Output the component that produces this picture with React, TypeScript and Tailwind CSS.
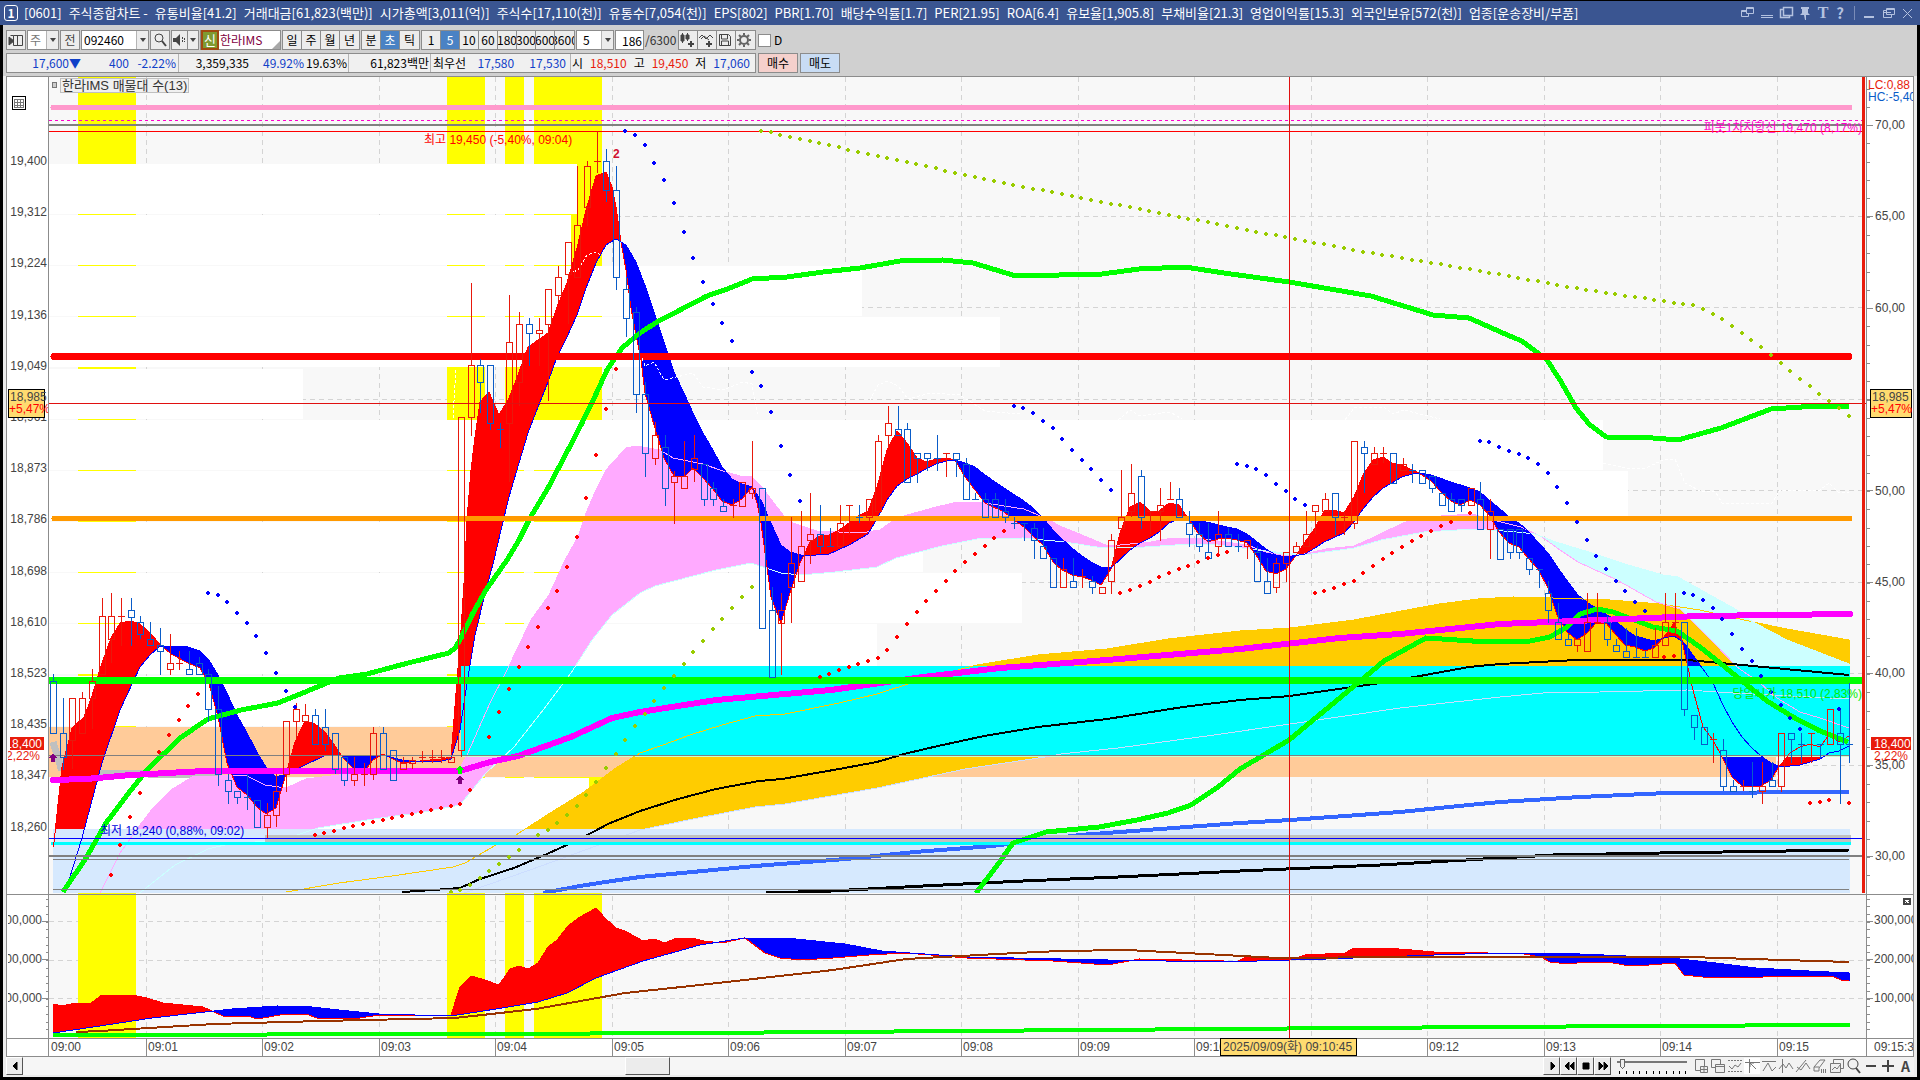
import { useState } from 'react';
import type { ReactNode } from 'react';

type Pt = [number, number];

const HEADER_ITEMS = [
  '[0601]', '주식종합차트 -', '유통비율[41.2]', '거래대금[61,823(백만)]', '시가총액[3,011(억)]',
  '주식수[17,110(천)]', '유통수[7,054(천)]', 'EPS[802]', 'PBR[1.70]', '배당수익률[1.7]', 'PER[21.95]',
  'ROA[6.4]', '유보율[1,905.8]', '부채비율[21.3]', '영업이익률[15.3]', '외국인보유[572(천)]',
  '업종[운송장비/부품]',
];

const CANDLE_X0 = 53.5;
const CANDLE_STEP = 9.71;

// [up, high, top, bottom, low] in chart y units
const CANDLES: number[][] = [
  [0, 674, 681, 733, 733], [0, 698, 733, 757, 770], [1, 698, 698, 740, 769], [1, 692, 698, 733, 733],
  [1, 669, 681, 698, 729], [1, 598, 616, 674, 674], [1, 593, 616, 639, 663], [1, 598, 616, 616, 646],
  [0, 598, 610, 617, 646], [0, 616, 622, 634, 639], [0, 622, 639, 645, 645], [0, 628, 645, 651, 675],
  [1, 634, 663, 669, 675], [1, 651, 663, 663, 670], [0, 651, 669, 674, 674], [0, 657, 663, 674, 674],
  [0, 669, 674, 709, 722], [0, 686, 709, 774, 786], [0, 774, 780, 791, 804], [0, 791, 791, 797, 804],
  [0, 774, 797, 797, 810], [0, 800, 800, 827, 827], [1, 803, 815, 827, 838], [1, 774, 791, 815, 827],
  [1, 721, 721, 774, 792], [1, 703, 709, 721, 739], [1, 704, 715, 721, 721], [0, 709, 715, 744, 744],
  [0, 709, 727, 744, 751], [0, 733, 733, 769, 774], [0, 757, 757, 780, 786], [1, 757, 774, 780, 786],
  [1, 763, 774, 774, 786], [1, 727, 733, 774, 780], [0, 727, 733, 769, 769], [0, 750, 750, 780, 780],
  [1, 757, 763, 769, 769], [1, 757, 760, 763, 769], [1, 751, 757, 757, 763], [1, 750, 757, 757, 763],
  [1, 750, 757, 757, 763], [1, 757, 757, 762, 762], [1, 417, 417, 750, 757], [1, 283, 365, 417, 436],
  [0, 359, 365, 382, 413], [0, 365, 365, 423, 430], [0, 423, 429, 429, 448], [1, 295, 342, 423, 482],
  [1, 312, 324, 382, 406], [0, 318, 324, 333, 366], [1, 318, 330, 333, 366], [1, 289, 289, 324, 401],
  [1, 266, 277, 295, 302], [1, 242, 242, 274, 324], [1, 166, 225, 277, 277], [1, 161, 166, 207, 226],
  [1, 131, 161, 161, 173], [0, 149, 161, 190, 202], [0, 166, 190, 277, 290], [0, 277, 289, 318, 337],
  [0, 307, 312, 394, 413], [0, 382, 394, 453, 477], [1, 422, 435, 458, 465], [0, 435, 447, 488, 506],
  [1, 471, 476, 482, 524], [1, 441, 476, 488, 488], [1, 435, 458, 469, 482], [0, 464, 464, 499, 506],
  [0, 482, 488, 499, 506], [0, 499, 506, 511, 511], [1, 499, 505, 505, 518], [1, 482, 482, 506, 506],
  [1, 441, 488, 493, 499], [0, 488, 488, 628, 628], [0, 587, 610, 677, 677], [1, 593, 610, 623, 675],
  [1, 517, 563, 587, 623], [1, 511, 546, 581, 581], [1, 493, 534, 540, 564], [0, 505, 534, 546, 553],
  [0, 528, 546, 546, 546], [1, 505, 523, 546, 546], [1, 505, 505, 505, 535], [0, 505, 517, 517, 523],
  [1, 499, 499, 517, 522], [1, 435, 441, 511, 511], [1, 406, 423, 435, 448], [0, 406, 429, 435, 435],
  [0, 423, 429, 482, 482], [0, 453, 453, 458, 483], [0, 453, 453, 458, 471], [0, 435, 458, 458, 471],
  [1, 453, 453, 453, 477], [0, 453, 453, 459, 477], [0, 458, 464, 499, 499], [0, 493, 499, 499, 499],
  [0, 493, 499, 517, 517], [0, 493, 499, 517, 517], [0, 499, 511, 517, 523], [0, 517, 523, 523, 529],
  [0, 523, 523, 523, 541], [0, 523, 528, 540, 559], [0, 528, 546, 558, 558], [0, 558, 558, 587, 587],
  [1, 558, 569, 587, 587], [0, 558, 581, 587, 587], [1, 569, 576, 576, 588], [0, 576, 581, 587, 594],
  [1, 587, 587, 593, 593], [1, 534, 540, 581, 594], [1, 470, 517, 528, 528], [1, 464, 493, 511, 517],
  [0, 470, 476, 517, 529], [1, 511, 511, 511, 534], [1, 488, 505, 511, 541], [1, 482, 499, 499, 499],
  [0, 488, 499, 517, 517], [0, 511, 523, 534, 547], [0, 523, 534, 546, 552], [0, 523, 552, 558, 558],
  [1, 511, 534, 546, 555], [0, 528, 534, 546, 546], [0, 534, 546, 546, 552], [1, 540, 540, 546, 559],
  [0, 546, 552, 581, 581], [0, 558, 581, 593, 593], [1, 558, 563, 587, 593], [1, 552, 552, 563, 582],
  [1, 542, 546, 552, 552], [1, 511, 534, 546, 546], [1, 505, 505, 511, 534], [1, 493, 499, 511, 511],
  [0, 493, 493, 517, 535], [1, 511, 517, 517, 535], [1, 441, 441, 523, 529], [0, 441, 447, 453, 493],
  [1, 447, 453, 464, 464], [1, 447, 453, 453, 463], [0, 453, 453, 483, 483], [1, 458, 464, 470, 470],
  [0, 464, 470, 470, 483], [0, 470, 470, 483, 483], [0, 476, 476, 488, 493], [0, 493, 493, 505, 505],
  [0, 493, 499, 511, 511], [0, 499, 499, 505, 512], [1, 488, 488, 505, 505], [0, 482, 499, 529, 529],
  [1, 499, 511, 529, 559], [0, 529, 529, 559, 559], [0, 529, 529, 552, 559], [0, 529, 529, 552, 559],
  [0, 558, 558, 569, 575], [0, 569, 569, 569, 588], [0, 581, 593, 610, 623], [0, 603, 622, 639, 639],
  [0, 634, 639, 645, 645], [1, 639, 639, 645, 652], [1, 593, 622, 651, 651], [1, 593, 622, 622, 622],
  [0, 616, 622, 639, 646], [0, 639, 645, 651, 651], [0, 628, 651, 657, 657], [0, 628, 657, 657, 657],
  [0, 651, 657, 657, 657], [1, 628, 645, 657, 657], [1, 593, 622, 645, 645], [1, 593, 622, 622, 634],
  [0, 622, 622, 709, 716], [0, 715, 715, 727, 740], [0, 727, 727, 744, 744], [1, 733, 739, 739, 763],
  [0, 739, 750, 786, 791], [0, 780, 786, 791, 791], [1, 780, 786, 786, 791], [0, 762, 791, 791, 798],
  [1, 762, 786, 791, 804], [0, 762, 780, 786, 786], [1, 733, 733, 786, 792], [0, 733, 733, 739, 763],
  [0, 733, 744, 744, 763], [1, 733, 733, 733, 763], [0, 744, 744, 744, 758], [1, 709, 709, 744, 744],
  [0, 709, 733, 744, 804], [0, 683, 744, 744, 763],
];

const FAST: Pt[] = [
  [53.5, 847], [62, 767], [72, 728], [84, 717], [91, 699], [101, 666], [111, 638], [120, 623], [131, 621],
  [140, 624], [149, 632], [159, 643], [163, 647], [171, 654], [188, 663], [200, 668], [209, 684], [218, 717],
  [227, 763], [237, 787], [247, 795], [257, 807], [266, 814], [276, 808], [286, 774], [295, 742], [305, 721],
  [315, 724], [325, 732], [335, 746], [344, 759], [353, 768], [363, 773], [373, 760], [383, 754], [393, 759],
  [402, 763], [420, 761], [441, 759], [451, 757], [461, 630], [464, 583], [467, 520], [471, 470], [475, 437],
  [480, 402], [489, 392], [499, 415], [509, 398], [518, 375], [528, 347], [548, 333], [557, 307], [567, 283],
  [577, 248], [586, 210], [596, 176], [606, 172], [612, 187], [616, 207], [621, 242], [626, 270], [631, 308],
  [636, 335], [641, 360], [645, 393], [654, 425], [664, 458], [674, 476], [684, 477], [693, 468], [703, 478],
  [713, 489], [722, 501], [732, 505], [742, 499], [752, 487], [757, 503], [761, 523], [771, 597], [781, 623],
  [790, 593], [800, 563], [804, 555], [810, 542], [820, 536], [829, 535], [839, 530], [849, 523], [858, 516],
  [868, 511], [877, 487], [887, 450], [897, 431], [907, 443], [917, 458], [926, 462], [936, 459], [946, 458],
  [955, 460], [965, 477], [975, 490], [985, 503], [1004, 512], [1014, 520], [1024, 527], [1033, 536],
  [1043, 545], [1053, 562], [1062, 570], [1072, 575], [1082, 577], [1091, 580], [1101, 585], [1111, 569],
  [1120, 533], [1130, 507], [1140, 502], [1150, 511], [1159, 511], [1169, 503], [1179, 505], [1188, 518],
  [1198, 533], [1208, 542], [1218, 539], [1227, 538], [1237, 540], [1247, 543], [1256, 555], [1266, 571],
  [1276, 574], [1286, 569], [1295, 557], [1305, 542], [1315, 528], [1324, 511], [1334, 510], [1344, 513],
  [1354, 497], [1363, 475], [1373, 460], [1383, 457], [1392, 463], [1402, 465], [1412, 470], [1419, 473],
  [1431, 481], [1441, 492], [1451, 501], [1460, 505], [1470, 500], [1480, 505], [1489, 515], [1499, 532],
  [1509, 543], [1519, 547], [1528, 558], [1538, 569], [1548, 588], [1557, 615], [1567, 632], [1577, 640],
  [1587, 633], [1596, 623], [1606, 623], [1616, 635], [1625, 645], [1635, 647], [1645, 651], [1654, 648],
  [1664, 637], [1674, 623], [1682, 640], [1684, 650], [1693, 690], [1703, 727], [1713, 740], [1722, 757],
  [1732, 777], [1742, 786], [1761, 786], [1771, 780], [1778, 768], [1790, 753], [1800, 747], [1810, 744],
  [1820, 747], [1829, 735], [1839, 742], [1849, 736],
];

const SLOW: Pt[] = [
  [53.5, 940], [65, 893], [82, 838], [102, 763], [120, 710], [140, 667], [150, 655], [159, 647], [163, 646],
  [188, 647], [200, 651], [209, 660], [218, 675], [227, 693], [237, 715], [247, 733], [257, 752], [266, 767],
  [276, 777], [286, 774], [305, 765], [324, 756], [344, 755], [363, 757], [383, 755], [402, 760], [420, 762],
  [441, 761], [451, 759], [460, 730], [467, 683], [475, 635], [486, 590], [494, 560], [501, 530], [509, 497],
  [519, 463], [528, 433], [538, 407], [548, 382], [557, 357], [567, 337], [577, 315], [586, 288], [596, 263],
  [606, 245], [616, 239], [626, 245], [636, 262], [646, 288], [654, 312], [664, 342], [674, 372], [684, 393],
  [693, 413], [703, 433], [713, 450], [722, 467], [732, 479], [742, 484], [752, 487], [762, 502], [771, 523],
  [781, 545], [790, 552], [804, 556], [829, 554], [849, 545], [868, 534], [878, 517], [887, 500], [897, 486],
  [907, 479], [917, 474], [926, 469], [936, 464], [946, 461], [955, 460], [965, 463], [975, 467], [985, 475],
  [1004, 488], [1024, 501], [1033, 508], [1043, 518], [1053, 530], [1062, 539], [1072, 548], [1082, 556],
  [1091, 562], [1101, 567], [1111, 568], [1130, 550], [1140, 543], [1150, 538], [1159, 532], [1169, 523],
  [1179, 519], [1188, 518], [1198, 520], [1227, 527], [1237, 529], [1247, 534], [1256, 541], [1266, 549],
  [1276, 555], [1286, 557], [1305, 554], [1315, 548], [1324, 542], [1344, 533], [1354, 522], [1363, 509],
  [1373, 497], [1383, 488], [1392, 483], [1402, 477], [1412, 474], [1421, 473], [1431, 475], [1451, 482],
  [1470, 488], [1480, 492], [1489, 500], [1499, 508], [1509, 517], [1519, 523], [1528, 531], [1538, 542],
  [1548, 553], [1558, 568], [1568, 582], [1578, 595], [1588, 603], [1596, 608], [1612, 618], [1625, 629],
  [1635, 636], [1654, 641], [1664, 638], [1674, 636], [1683, 642], [1688, 648], [1700, 665], [1713, 683],
  [1722, 703], [1732, 722], [1742, 737], [1752, 748], [1761, 756], [1771, 763], [1781, 767], [1800, 765],
  [1820, 759], [1829, 753], [1839, 751], [1849, 746],
];

const PINK: Pt[] = [
  [100, 893], [120, 853], [140, 825], [153, 808], [171, 790], [192, 777], [245, 775], [265, 785], [286, 788],
  [306, 779], [339, 775], [449, 773], [460, 768], [467, 755], [490, 703], [508, 668], [531, 620], [549, 595],
  [565, 560], [578, 537], [586, 513], [596, 490], [606, 470], [626, 448], [636, 446], [660, 450], [673, 458],
  [703, 464], [723, 471], [740, 476], [752, 477], [762, 487], [783, 515], [793, 523], [817, 531], [860, 533],
  [880, 530], [897, 518], [918, 512], [936, 507], [958, 502], [985, 503], [1004, 506], [1024, 509],
  [1043, 517], [1062, 527], [1082, 535], [1108, 546], [1120, 545], [1151, 542], [1172, 538], [1197, 538],
  [1218, 541], [1247, 545], [1266, 552], [1286, 556], [1304, 554], [1326, 549], [1354, 546], [1372, 538],
  [1403, 523], [1424, 517], [1474, 514], [1481, 517], [1521, 527], [1542, 537], [1560, 550], [1578, 562],
  [1617, 580], [1656, 602], [1680, 609], [1713, 642], [1737, 667], [1760, 683], [1777, 698], [1800, 712],
  [1820, 718], [1849, 728],
];

const PALE: Pt[] = [
  [100, 910], [141, 892], [175, 865], [208, 849], [229, 844], [282, 840], [318, 828], [367, 820], [424, 812],
  [460, 805], [486, 773], [514, 747], [547, 705], [571, 673], [592, 640], [612, 615], [640, 593], [655, 586],
  [693, 576], [716, 570], [751, 563], [766, 568], [781, 573], [801, 575], [835, 572], [877, 567], [896, 558],
  [919, 552], [942, 546], [977, 539], [1023, 538], [1065, 542], [1103, 548], [1145, 547], [1191, 544],
  [1218, 545], [1266, 551], [1304, 555], [1354, 548], [1381, 540], [1424, 532], [1474, 529], [1517, 532],
  [1535, 534], [1556, 542], [1592, 553], [1628, 565], [1663, 575], [1678, 577], [1703, 591], [1737, 610],
  [1753, 622], [1787, 640], [1849, 664],
];

const GOLD: Pt[] = [
  [286, 892], [339, 883], [392, 876], [453, 867], [465, 863], [496, 845], [516, 835], [547, 815], [584, 792],
  [616, 768], [640, 753], [663, 745], [690, 735], [722, 725], [755, 716], [785, 714], [839, 703], [877, 694],
  [908, 684], [946, 673], [977, 665], [1038, 655], [1107, 649], [1168, 639], [1240, 631], [1290, 628],
  [1354, 620], [1396, 612], [1439, 604], [1478, 599], [1513, 597], [1553, 598], [1610, 600], [1660, 604],
  [1700, 610], [1753, 622], [1787, 629], [1849, 640],
];

const GOLD_BASE: Pt[] = [
  [286, 960], [467, 892], [530, 870], [640, 830], [693, 819], [755, 807], [785, 804], [877, 788], [965, 769],
  [1045, 757], [1061, 754], [1118, 748], [1214, 735], [1290, 724], [1400, 708], [1500, 697], [1543, 693],
  [1600, 692], [1687, 690], [1733, 693], [1849, 699],
];

const BLACK_MID: Pt[] = [
  [402, 892], [433, 890], [460, 888], [480, 879], [514, 868], [547, 854], [580, 839], [608, 824], [640, 811],
  [678, 799], [716, 789], [759, 781], [782, 779], [839, 769], [877, 762], [904, 754], [938, 746], [984, 736],
  [1038, 727], [1107, 719], [1183, 707], [1240, 700], [1290, 696], [1387, 682], [1469, 667], [1500, 664],
  [1577, 660], [1687, 660], [1753, 666], [1849, 675],
];

const BLACK_LOW: Pt[] = [
  [766, 893], [831, 891], [923, 886], [1023, 881], [1118, 877], [1240, 871], [1380, 865], [1500, 858],
  [1553, 855], [1660, 853], [1849, 850],
];

const BLUE_LONG: Pt[] = [
  [543, 893], [580, 886], [612, 881], [640, 877], [755, 866], [846, 859], [915, 852], [992, 846], [1080, 835],
  [1160, 829], [1240, 823], [1290, 820], [1400, 812], [1469, 805], [1500, 802], [1580, 797], [1667, 793],
  [1849, 792],
];

const MAGENTA: Pt[] = [
  [53, 780], [86, 779], [131, 775], [204, 771], [460, 771], [490, 762], [518, 756], [571, 737], [612, 718],
  [640, 712], [716, 700], [831, 690], [923, 677], [1000, 668], [1107, 660], [1240, 649], [1340, 638],
  [1400, 634], [1500, 624], [1600, 620], [1700, 616], [1850, 614],
];

const GREEN_TOP: Pt[] = [
  [63, 892], [86, 858], [106, 823], [131, 790], [147, 770], [180, 738], [208, 719], [241, 710], [278, 703],
  [310, 690], [339, 678], [367, 674], [408, 663], [449, 653], [455, 648], [461, 638], [473, 613], [486, 590],
  [507, 560], [519, 540], [530, 518], [548, 488], [568, 450], [582, 423], [597, 392], [607, 370], [622, 348],
  [640, 333], [657, 322], [680, 310], [707, 296], [730, 288], [752, 279], [787, 277], [823, 272], [860, 268],
  [900, 261], [943, 260], [973, 263], [1016, 276], [1102, 274], [1139, 269], [1185, 267], [1224, 273],
  [1289, 282], [1371, 296], [1433, 315], [1469, 318], [1512, 337], [1522, 341], [1547, 360], [1560, 380],
  [1576, 408], [1589, 424], [1606, 437], [1653, 438], [1678, 440], [1721, 428], [1771, 409], [1817, 406],
  [1849, 407],
];

const GREEN_LOW: Pt[] = [
  [976, 893], [996, 867], [1013, 843], [1046, 832], [1099, 827], [1137, 820], [1168, 813], [1191, 805],
  [1218, 787], [1240, 769], [1289, 740], [1347, 692], [1384, 661], [1426, 638], [1488, 642], [1530, 641],
  [1550, 637], [1567, 627], [1580, 614], [1597, 609], [1613, 612], [1653, 627], [1677, 631], [1700, 647],
  [1720, 663], [1747, 685], [1767, 701], [1793, 717], [1820, 731], [1848, 742],
];

const GRAY_FLOOR: Pt[] = [
  [53, 742], [61, 768], [82, 773], [212, 775], [218, 783], [227, 804], [241, 806], [249, 812], [265, 838],
  [1849, 838],
];

const WHITE_DASH: Pt[][] = [
  [[573, 272], [578, 270], [587, 255], [596, 252], [600, 255]],
  [[642, 358], [645, 366], [654, 362], [664, 380], [693, 373], [703, 387], [723, 390], [743, 382], [752, 384], [758, 417]],
  [[453, 418], [456, 368]],
  [[870, 400], [878, 385], [888, 381], [898, 386], [908, 399], [930, 393], [960, 395], [985, 411], [1020, 414]],
  [[1118, 420], [1130, 410], [1140, 416], [1170, 412], [1182, 419]],
  [[1345, 420], [1355, 407], [1384, 407], [1393, 414], [1404, 410], [1440, 419]],
  [[1603, 463], [1625, 468], [1646, 468], [1665, 459], [1675, 459], [1685, 483], [1700, 491], [1715, 491], [1722, 503], [1772, 503], [1780, 490], [1820, 490], [1829, 483], [1838, 492], [1849, 492]],
];

const BLUE_DOTS: Pt[] = [
  [208, 593], [218, 595], [227, 602], [237, 613], [247, 623], [256, 636], [266, 653], [276, 673], [286, 691],
  [295, 707], [625, 131], [635, 135], [645, 145], [654, 163], [664, 180], [674, 203], [684, 232], [693, 258],
  [703, 282], [713, 304], [722, 323], [732, 341], [752, 372], [761, 386], [771, 412], [781, 446], [790, 475],
  [800, 501], [1014, 406], [1023, 408], [1033, 413], [1043, 421], [1053, 428], [1062, 439], [1072, 450],
  [1082, 460], [1091, 469], [1101, 480], [1111, 490], [1237, 464], [1247, 466], [1256, 469], [1266, 475],
  [1276, 484], [1286, 491], [1295, 499], [1305, 505], [1480, 441], [1489, 442], [1499, 447], [1509, 451],
  [1519, 454], [1528, 458], [1538, 464], [1548, 473], [1557, 487], [1567, 503], [1577, 522], [1587, 540],
  [1596, 556], [1606, 569], [1616, 581], [1625, 591], [1635, 602], [1645, 611], [1684, 593], [1693, 595],
  [1703, 600], [1713, 608], [1722, 619], [1732, 634], [1742, 649], [1752, 661], [1761, 676], [1771, 692],
  [1781, 705], [1790, 718], [1800, 729], [1839, 709],
];

const RED_DOTS: Pt[] = [
  [111, 875], [120, 845], [130, 817], [140, 793], [159, 752], [169, 735], [179, 720], [188, 706], [198, 694],
  [315, 835], [324, 833], [334, 831], [344, 828], [353, 826], [363, 824], [373, 822], [383, 820], [392, 818],
  [402, 816], [412, 814], [421, 812], [431, 810], [441, 808], [451, 806], [460, 804], [470, 790], [489, 737],
  [499, 712], [509, 689], [519, 667], [528, 647], [538, 627], [548, 608], [557, 591], [567, 567], [577, 537],
  [586, 498], [596, 455], [606, 409], [616, 369], [820, 677], [829, 674], [839, 670], [849, 667], [858, 664],
  [868, 661], [878, 658], [887, 650], [897, 637], [907, 624], [917, 612], [926, 601], [936, 591], [946, 581],
  [955, 571], [965, 562], [975, 554], [985, 546], [994, 538], [1004, 531], [1120, 593], [1130, 590],
  [1140, 586], [1150, 582], [1159, 577], [1169, 573], [1179, 569], [1188, 566], [1198, 562], [1208, 558],
  [1218, 555], [1227, 552], [1315, 593], [1324, 591], [1334, 588], [1344, 584], [1354, 581], [1363, 573],
  [1373, 566], [1383, 559], [1392, 553], [1402, 547], [1412, 541], [1421, 536], [1431, 531], [1441, 526],
  [1451, 522], [1470, 513], [1664, 657], [1674, 656], [1810, 803], [1820, 802], [1829, 800], [1849, 803],
];

const OLIVE_RISE: Pt[] = [
  [451, 892], [460, 890], [470, 885], [480, 878], [489, 871], [499, 864], [509, 857], [519, 850], [538, 835],
  [548, 830], [557, 823], [567, 815], [577, 806], [586, 795], [596, 782], [606, 768], [616, 754], [625, 740],
  [635, 726], [645, 714], [654, 701], [664, 688], [674, 676], [684, 664], [693, 652], [703, 641], [713, 629],
  [722, 619], [732, 608], [742, 597], [752, 587],
];

const OLIVE_FALL: Pt[] = [
  [761, 131], [771, 132], [781, 135], [994, 181], [1289, 238], [1371, 253], [1469, 269], [1580, 289],
  [1698, 306], [1727, 322], [1752, 340], [1781, 363], [1800, 379], [1829, 401], [1849, 416],
];

const VOL_FAST: Pt[] = [
  [53, 1004], [62, 1006], [71, 1004], [91, 1003], [102, 995], [132, 995], [147, 998], [163, 1003], [203, 1007],
  [214, 1012], [223, 1016], [248, 1016], [257, 1019], [286, 1014], [306, 1014], [317, 1018], [353, 1019],
  [373, 1016], [451, 1015], [460, 987], [471, 976], [482, 979], [499, 985], [510, 969], [519, 966], [528, 969],
  [538, 963], [548, 947], [557, 940], [568, 926], [580, 917], [596, 908], [606, 919], [616, 928], [625, 931],
  [643, 941], [654, 939], [665, 943], [674, 939], [692, 938], [704, 941], [722, 943], [745, 938], [765, 953],
  [780, 958], [802, 960], [833, 958], [869, 955], [906, 953], [967, 958], [1053, 961], [1108, 965],
  [1139, 959], [1224, 961], [1238, 961], [1249, 956], [1258, 959], [1296, 958], [1305, 955], [1345, 953],
  [1354, 948], [1385, 948], [1412, 950], [1434, 952], [1488, 953], [1524, 954], [1541, 957], [1550, 962],
  [1568, 964], [1586, 962], [1608, 962], [1624, 965], [1649, 965], [1675, 963], [1684, 975], [1702, 977],
  [1753, 978], [1774, 976], [1832, 976], [1841, 980], [1849, 981],
];

const VOL_SLOW: Pt[] = [
  [53, 1033], [80, 1029], [152, 1018], [205, 1012], [232, 1009], [277, 1006], [312, 1007], [339, 1010],
  [379, 1014], [451, 1016], [496, 1009], [538, 1002], [567, 993], [596, 978], [643, 961], [700, 945],
  [744, 938], [796, 939], [845, 944], [882, 951], [967, 957], [1108, 960], [1224, 962], [1291, 960],
  [1327, 959], [1434, 955], [1497, 953], [1555, 953], [1604, 955], [1671, 958], [1716, 963], [1756, 968],
  [1809, 971], [1849, 973],
];

const VOL_BROWN: Pt[] = [
  [76, 1032], [100, 1031], [214, 1024], [321, 1021], [455, 1018], [536, 1009], [625, 993], [700, 985],
  [833, 970], [906, 959], [1016, 953], [1060, 951], [1127, 950], [1224, 955], [1278, 958], [1399, 957],
  [1689, 957], [1751, 959], [1849, 962],
];

const VOL_GREEN: Pt[] = [[53, 1035], [482, 1034], [700, 1033], [1220, 1029], [1490, 1027], [1645, 1026], [1850, 1025]];

// right edge of each volume-at-price bar, top to bottom
const PROFILE = [577, 571, 862, 1000, 303, 1603, 1628, 923, 1022, 877, 700];

const HIGHLIGHTS: Pt[] = [[78, 136], [447, 485], [505, 524], [534, 602]];
const LEFT_LABELS = [
  '19,400', '19,312', '19,224', '19,136', '19,049', '18,961', '18,873', '18,786', '18,698', '18,610',
  '18,523', '18,435', '18,347', '18,260',
];
const RIGHT_LABELS = ['70,00', '65,00', '60,00', '', '50,00', '45,00', '40,00', '35,00', '30,00'];
const MINUTES = Array.from({ length: 15 }, (_, i) => 146 + i * 116.5);
const CURSOR_MINUTE = 11;

function line(pts: Pt[]) {
  return 'M' + pts.map((p) => p.join(' ')).join('L');
}

function at(pts: Pt[], x: number) {
  const i = pts.findIndex((p) => p[0] >= x);
  if (i < 0) return pts[pts.length - 1][1];
  if (i === 0) return pts[0][1];
  const [x0, y0] = pts[i - 1];
  const [x1, y1] = pts[i];
  return y0 + ((y1 - y0) * (x - x0)) / (x1 - x0);
}

/** Area between two averages, coloured by which one is on top. */
function Ribbon({ fast, slow, up, down }: { fast: Pt[]; slow: Pt[]; up: string; down: string }) {
  const xs: number[] = [];
  for (let x = fast[0][0]; x <= 1850; x += 1) xs.push(x);
  const base = xs.map((x): Pt => [x, at(slow, x)]).reverse();
  const over = xs.map((x): Pt => [x, Math.min(at(fast, x), at(slow, x))]);
  const under = xs.map((x): Pt => [x, Math.max(at(fast, x), at(slow, x))]);
  return (
    <>
      <path d={line([...over, ...base]) + 'Z'} fill={up} />
      <path d={line([...under, ...base]) + 'Z'} fill={down} />
    </>
  );
}

function Dots({ pts, color }: { pts: Pt[]; color: string }) {
  return (
    <g fill={color}>
      {pts.map(([x, y]) => (
        <path key={`${x}-${y}`} d={`M${x - 1} ${y - 2}h2v1h1v2h-1v1h-2v-1h-1v-2h1z`} />
      ))}
    </g>
  );
}

function Candles() {
  return (
    <g fill="none">
      {CANDLES.map(([up, high, top, bottom, low], i) => {
        const x = Math.floor(CANDLE_X0 + i * CANDLE_STEP) + 0.5;
        const body = top === bottom ? `M${x - 3.5} ${top + 0.5}h7` : `M${x - 3} ${top + 0.5}h6V${bottom + 0.5}h-6z`;
        return (
          <path
            key={i}
            stroke={up ? '#e8190c' : '#0a5cc8'}
            d={`M${x} ${high}V${top}M${x} ${bottom}V${low}${body}`}
          />
        );
      })}
    </g>
  );
}

function PriceTag({ x, width }: { x: number; width: number }) {
  return (
    <g>
      <rect x={x + 0.5} y="389.5" width={width} height="28" fill="#ffdb70" stroke="#000" shapeRendering="crispEdges" />
      <text x={x + 2} y="401" fill="#444">18,985</text>
      <text x={x + 1} y="413" fill="#f00">+5,47%</text>
    </g>
  );
}

function Chart() {
  const fallXs = Array.from({ length: 113 }, (_, i) => 761 + i * 9.71);
  const ticks = Array.from({ length: 44 }, (_, i) => 88.5 + i * 18.3).filter((y) => y < 890);
  const volTicks = Array.from({ length: 18 }, (_, i) => 898.5 + i * 7.7);
  return (
    <svg
      viewBox="6 76 1908 981"
      className="block h-auto w-full bg-white font-['Liberation_Sans','Noto_Sans_CJK_KR',sans-serif] text-[12px]"
      role="img"
      aria-label="한라IMS 5초 차트"
    >
      <defs>
        <clipPath id="price"><rect x="49" y="77" width="1817" height="816" /></clipPath>
        <clipPath id="left"><rect x="8" y="77" width="40" height="961" /></clipPath>
        <clipPath id="right"><rect x="1867" y="77" width="46" height="980" /></clipPath>
      </defs>

      <g shapeRendering="crispEdges">
        <rect x="49" y="77" width="1817" height="961" fill="#f8f8f8" />
        <g stroke="#d4d4d4" strokeDasharray="5 4">
          {MINUTES.map((x) => <path key={x} d={`M${Math.floor(x) + 0.5} 77V1038`} />)}
          {[216, 307, 399, 490, 582, 673, 765, 921, 960, 998].map((y) => (
            <path key={y} d={`M49 ${y + 0.5}H1866`} />
          ))}
        </g>
        {HIGHLIGHTS.map(([a, b]) => <rect key={a} x={a} y="77" width={b - a} height="961" fill="#ff0" />)}

        {PROFILE.map((edge, i) => (
          <rect key={i} x="49" y={Math.round(164 + i * 51.15)} width={edge - 49} height="50" fill="#fff" />
        ))}
        <rect x="49" y="727" width="1727" height="50" fill="#ffcb99" />
        <rect x="49" y="778" width="540" height="51" fill="#fff" />

        <g clipPath="url(#price)" fill="none">
          <path d={line(GRAY_FLOOR)} stroke="#c0c0c0" strokeWidth="7" />
          <Ribbon fast={GOLD} slow={GOLD_BASE} up="#fc0" down="#cde" />
          <Ribbon fast={PINK} slow={PALE} up="#faf" down="#cff" />
          <Ribbon fast={FAST} slow={SLOW} up="#f00" down="#00f" />
          <rect x="53" y="829" width="1797" height="64" fill="#d6e9fe" />
          <rect x="461" y="666" width="1389" height="90" fill="#0ff" />
          <path d="M461 756.5H1850" stroke="#cfc" />
          <path d={line(GOLD)} stroke="#fc0" />
          <path d={line(GOLD_BASE)} stroke="#cdf" />
          <path d={line(PINK)} stroke="#faf" />
          <path d={line(PALE)} stroke="#cff" />
          <path d={line(BLUE_LONG)} stroke="#36f" strokeWidth="4" />
          <path d={line(BLACK_LOW)} stroke="#000" strokeWidth="3" />
          <path d={line(BLACK_MID)} stroke="#000" strokeWidth="2" />
          <path d="M265 838.5H1851" stroke="#c0c0c0" strokeWidth="7" />
          <path d="M51 843.5H1851" stroke="#0ff" strokeWidth="3" />
          <path d={line(FAST)} stroke="#f00" />
          <path d={line(SLOW)} stroke="#00f" />
          <path d={line(GREEN_LOW)} stroke="#0f0" strokeWidth="5" />
          <path d={line(GREEN_TOP)} stroke="#0f0" strokeWidth="5" />
          <path d={line(MAGENTA)} stroke="#f0f" strokeWidth="6" strokeLinecap="round" />
          <g strokeLinecap="round">
            <path d="M53 107.5H1850" stroke="#f9c" strokeWidth="5" />
            <path d="M54 356.5H1849" stroke="#f00" strokeWidth="7" />
            <path d="M54 518.5H1850" stroke="#f90" strokeWidth="5" />
          </g>
          <path d="M49 680.5H1862" stroke="#0f0" strokeWidth="7" />
          <path d="M49 120.5H1862" stroke="#f0c" strokeDasharray="3 3" />
          <path d="M49 125H1862M49 856H1862" stroke="#808080" strokeWidth="2" />
          <path d="M49 755.5H1850M53 859.5H1849M53 889.5H1849" stroke="#808080" />
          <path d="M49 131.5H1862" stroke="#f00" />
          <path d="M49 838.5H1862" stroke="#00f" />
          <g stroke="#fff" strokeDasharray="3 2">
            {WHITE_DASH.map((seg) => <path key={seg[0][0]} d={line(seg)} />)}
          </g>
          <Candles />
          <Dots pts={BLUE_DOTS} color="#00f" />
          <Dots pts={RED_DOTS} color="#f00" />
          <Dots pts={OLIVE_RISE} color="#9c0" />
          <Dots pts={fallXs.map((x): Pt => [Math.round(x), Math.round(at(OLIVE_FALL, x))])} color="#9c0" />
          <path d="M53 753l4 5h-2v4h-4v-4h-2zM460 775l4 5h-2v4h-4v-4h-2z" fill="#800080" />
          <path d="M460 765l4 5h-2v4h-4v-4h-2z" fill="#0f0" />
        </g>

        {/* volume pane */}
        <g fill="none">
          <Ribbon fast={VOL_FAST} slow={VOL_SLOW} up="#f00" down="#00f" />
          <path d={line(VOL_FAST)} stroke="#f00" />
          <path d={line(VOL_SLOW)} stroke="#00f" />
          <path d={line(VOL_BROWN)} stroke="#930" strokeWidth="2" />
          <path d={line(VOL_GREEN)} stroke="#0f0" strokeWidth="4" />
        </g>

        <path d="M49 403.5H1866M1289.5 77V1038" stroke="#e01010" />
        <path d="M1863.5 77V893" stroke="#e81c0c" strokeWidth="3" />
        <path
          d="M6 76.5H1914M6.5 76V1057M48.5 77V1056M1866.5 77V1056M1913.5 76V1057M6 894.5H1914M6 1038.5H1914M6 1056.5H1914"
          stroke="#8c8c8c"
        />
        <g stroke="#8c8c8c">
          {ticks.map((y) => <path key={y} d={`M1867 ${Math.round(y) + 0.5}h3`} />)}
          {[125, 216, 308, 399, 490, 582, 673, 765, 856].map((y) => <path key={y} d={`M1867 ${y + 0.5}h6`} />)}
          {volTicks.map((y) => (
            <path key={y} d={`M1867 ${Math.round(y) + 0.5}h3M48 ${Math.round(y) + 0.5}h-2`} />
          ))}
          {[921, 959, 998].map((y) => <path key={y} d={`M1867 ${y + 0.5}h6M48 ${y + 0.5}h-6`} />)}
          {MINUTES.map((x) => <path key={x} d={`M${Math.floor(x) + 0.5} 1039V1056`} />)}
        </g>
        <path d="M12.5 96.5h13v13h-13z" fill="#fff" stroke="#000" strokeWidth="1" />
        <path d="M14.500 99.500h9v8h-9zM14 102.500h10M14 105.500h10M17.500 99v8M20.500 99v8" fill="none" stroke="#777" />
        <rect x="60.5" y="78.5" width="128" height="14" fill="#f0f0f0" stroke="#c0c0c0" />
        <rect x="52.5" y="82.5" width="4" height="5" fill="#ccc" stroke="#777" />
        <rect x="1903" y="898" width="8" height="7" fill="#444" />
        <path d="M1905 900l4 3m0-3l-4 3" stroke="#fff" />
      </g>

      <text x="62" y="90" fill="#333" className="text-[13px]">한라IMS 매물대 수(13)</text>
      <text x="424" y="144" fill="#f00">최고 19,450 (-5,40%, 09:04)</text>
      <text x="100" y="835" fill="#00d">최저 18,240 (0,88%, 09:02)</text>
      <text x="613" y="158" fill="#d01030" className="font-bold">2</text>
      <text x="1862" y="132" fill="#f0c" textAnchor="end">피봇1차저항선 19,470 (8,17%)</text>
      <text x="1862" y="698" fill="#0e0" textAnchor="end">당일시가 18,510 (2,83%)</text>

      <g fill="#444" textAnchor="end" clipPath="url(#left)">
        {LEFT_LABELS.map((label, i) => (
          <text key={label} x="47" y={Math.round(165 + i * 51.2)}>{label}</text>
        ))}
        {['300,000', '200,000', '100,000'].map((label, i) => (
          <text key={label} x="42" y={924 + i * 39}>{label}</text>
        ))}
      </g>
      <g fill="#444" clipPath="url(#right)">
        {RIGHT_LABELS.map((label, i) => label && (
          <text key={label} x="1875" y={Math.round(129 + i * 91.4)}>{label}</text>
        ))}
        {['300,000', '200,000', '100,000'].map((label, i) => (
          <text key={label} x="1874" y={924 + i * 39}>{label}</text>
        ))}
        <text x="1868" y="89" fill="#e81c0c">LC:0,88</text>
        <text x="1868" y="101" fill="#0a5cc8">HC:-5,40</text>
        <text x="1874" y="1051">09:15:30</text>
      </g>

      <g clipPath="url(#left)">
        <PriceTag x={8} width={36} />
        <rect x="10" y="737" width="34" height="13" fill="#e81c0c" />
        <text x="42" y="748" fill="#fff" textAnchor="end">18,400</text>
        <text x="40" y="760" fill="#e81c0c" textAnchor="end">2,22%</text>
      </g>
      <PriceTag x={1870} width={41} />
      <rect x="1871" y="737" width="40" height="13" fill="#e81c0c" />
      <text x="1874" y="748" fill="#fff">18,400</text>
      <text x="1874" y="760" fill="#e81c0c">2,22%</text>

      <g fill="#444">
        <text x="51" y="1051">09:00</text>
        {MINUTES.map((x, i) => i + 1 !== CURSOR_MINUTE && (
          <text key={x} x={Math.floor(x) + 2} y="1051">{`09:${String(i + 1).padStart(2, '0')}`}</text>
        ))}
        <rect x="1220.5" y="1038.5" width="136" height="17" fill="#ffdb70" stroke="#000" shapeRendering="crispEdges" />
        <text x="1223" y="1051">2025/09/09(화) 09:10:45</text>
      </g>
    </svg>
  );
}

function Glyph({ children, className = '' }: { children: ReactNode; className?: string }) {
  return (
    <svg viewBox="0 0 16 16" className={`h-4 w-4 shrink-0 ${className}`} fill="none" stroke="currentColor" aria-hidden="true">
      {children}
    </svg>
  );
}

const btnBase = 'flex h-5 shrink-0 items-center justify-center border border-[#8c8c8c] bg-[#ececec] text-[#444]';
const toolBtn = `${btnBase} w-5`;

function Combo({ label, value, className }: { label: string; value: string; className: string }) {
  return (
    <span className={`flex h-5 shrink-0 border border-[#8c8c8c] bg-white ${className}`}>
      <select aria-label={label} className="min-w-0 flex-1 appearance-none bg-white pl-[2px] outline-none">
        <option>{value}</option>
      </select>
      <span className="pointer-events-none flex w-3 items-center justify-center border-l border-[#b4b4b4] bg-[#ececec]">
        <span className="border-x-[3px] border-t-4 border-x-transparent border-t-[#444]" />
      </span>
    </span>
  );
}

function ButtonGroup({ items, active, onPick }: { items: string[]; active?: string; onPick?: (v: string) => void }) {
  return (
    <div className="flex h-5 shrink-0 divide-x divide-[#8c8c8c] border border-[#8c8c8c]">
      {items.map((item) => (
        <button
          key={item}
          onClick={() => onPick?.(item)}
          className={`flex w-[19px] items-center justify-center overflow-hidden ${
            item === active ? 'bg-[#4a82c4] text-white' : 'bg-[#ececec]'
          }`}
        >
          {item}
        </button>
      ))}
    </div>
  );
}

function TitleBar() {
  return (
    <header className="flex h-6 items-center bg-[#3a5591] pr-1 pl-1 text-[13px] text-white">
      <span className="mr-[6px] flex h-4 w-[14px] shrink-0 items-center justify-center rounded-[3px] border border-white text-[12px] font-bold">
        1
      </span>
      <h1 className="flex min-w-0 flex-1 gap-[7px] overflow-hidden whitespace-nowrap">
        {HEADER_ITEMS.map((item) => <span key={item}>{item}</span>)}
      </h1>
      <div className="flex items-center gap-[3px] text-[#b4c2e0]">
        <button aria-label="분리"><Glyph><path d="M6.5 2.5h7v6h-7zM6 5.5H1.5v6h7V9M6 3.5h8M1 6.5h5" /></Glyph></button>
        <button aria-label="접기"><Glyph><path d="M2 10.5h12M2 12.5h12" /></Glyph></button>
        <button aria-label="복제"><Glyph><path d="M5.5 2.5h9v8h-9zM5 4.5H2.5v8h9V11" strokeWidth="1.5" /></Glyph></button>
        <button aria-label="고정"><Glyph><path d="M4 2h8v2h-1v4l2 2H9v5H8l-1-5H3l2-2V4H4z" fill="currentColor" stroke="none" /></Glyph></button>
        <button aria-label="글꼴" className="w-[14px] font-['Liberation_Serif',serif] text-[16px] leading-4 font-bold">T</button>
        <button aria-label="도움말" className="w-[14px] text-[15px] leading-4 font-bold">?</button>
        <span className="mx-1 h-[14px] w-px bg-[#7a8cb8]" />
        <button aria-label="최소화"><Glyph><path d="M2 12h10" strokeWidth="2" /></Glyph></button>
        <button aria-label="복원"><Glyph><path d="M5.5 3.5h8v6h-8zM5 5.5H2.5v7h8V10M5 4.5h9M2 7.5h8" /></Glyph></button>
        <button aria-label="닫기"><Glyph><path d="M3 4l9 9m0-9l-9 9" /></Glyph></button>
      </div>
    </header>
  );
}

function Toolbar() {
  const [period, setPeriod] = useState('초');
  const [unit, setUnit] = useState('5');
  return (
    <div className="flex h-5 items-center gap-px text-[12px] whitespace-nowrap text-black">
      <button className={toolBtn} aria-label="메뉴">
        <Glyph><path d="M5.5 3.5h9v10h-9M2.5 3.5h3v10M9.5 4v9" /><path d="M1 5l5 4-5 4z" fill="currentColor" /></Glyph>
      </button>
      <Combo label="종류" value="주" className="w-8 text-[#777]" />
      <button className={toolBtn}>전</button>
      <Combo label="종목코드" value="092460" className="w-[68px]" />
      <button className={toolBtn} aria-label="검색">
        <Glyph><circle cx="7" cy="6" r="4" /><path d="M10 9l4 5" strokeWidth="2" /></Glyph>
      </button>
      <div className="flex">
        <button className={`${btnBase} w-[17px]`} aria-label="소리">
          <Glyph><path d="M1 6h3l4-4v12l-4-4H1z" fill="currentColor" stroke="none" /><path d="M10.5 5v6M12.5 6v4" strokeDasharray="2 1" /></Glyph>
        </button>
        <button className={`${btnBase} -ml-px w-3`} aria-label="소리 설정">
          <span className="border-x-[3px] border-t-4 border-x-transparent border-t-[#444]" />
        </button>
      </div>
      <div className="flex h-5 w-[81px] items-center border border-[#8c8c8c] bg-white text-[#800040]">
        <span className="flex h-5 w-[18px] items-center justify-center border-2 border-[#a04a10] bg-[#7f9a30] text-[13px] text-white">신</span>
        <span className="flex-1 pl-px">한라IMS</span>
        <span className="self-end border-b-8 border-l-8 border-b-[#a8a8a8] border-l-transparent" />
      </div>
      <ButtonGroup items={['일', '주', '월', '년']} />
      <ButtonGroup items={['분', '초', '틱']} active={period} onPick={setPeriod} />
      <ButtonGroup items={['1', '5', '10', '60', '180', '300', '600', '3600']} active={unit} onPick={setUnit} />
      <Combo label="주기" value="5" className="w-[38px] pl-1" />
      <input
        aria-label="표시 봉수"
        defaultValue="186"
        className="h-5 w-[29px] border border-[#8c8c8c] bg-white pr-px text-right outline-none"
      />
      <span className="w-8 text-[#333]">/6300</span>
      <div className="flex h-5 divide-x divide-[#8c8c8c] border border-[#8c8c8c] bg-[#ececec] text-[#444]">
        <button className="w-[19px]" aria-label="지표 추가">
          <Glyph><path d="M3.5 1v10M8.5 1v8" /><path d="M2 3h3v6H2zM7 3h3v4H7z" fill="currentColor" /><path d="M12 9v6M9 12h6" strokeWidth="2" /></Glyph>
        </button>
        <button className="w-[19px]" aria-label="선 추가">
          <Glyph><path d="M1 6l3-3 4 4 4-4 3 3M3 7l3-3 5 4" /><path d="M11 9v6M8 12h6" strokeWidth="2" /></Glyph>
        </button>
        <button className="w-[19px]" aria-label="저장">
          <Glyph><path d="M2.5 2.5h9l2 2v9h-11zM4.5 3v4h6V3M4.5 13V9h7v4" /></Glyph>
        </button>
        <button className="w-[19px]" aria-label="설정">
          <Glyph className="text-[#666]"><circle cx="8" cy="8" r="4" strokeWidth="2" /><path d="M8 1v2M8 13v2M1 8h2M13 8h2M3 3l2 2M11 11l2 2M13 3l-2 2M5 11l-2 2" strokeWidth="2" /></Glyph>
        </button>
      </div>
      <label className="flex items-center gap-[3px] pl-px">
        <input type="checkbox" className="h-[13px] w-[13px] appearance-none border border-[#8c8c8c] bg-white" />D
      </label>
    </div>
  );
}

function Quote() {
  const cell = 'flex items-center';
  return (
    <div className="flex h-5 gap-[2px] text-[12px] whitespace-nowrap">
      <dl className="flex divide-x divide-[#b4b4b4] border border-[#8c8c8c] bg-[#f0f0f0] text-right">
        <dd className={`${cell} w-[172px] text-[#1040c8]`}>
          <span className="w-[74px]">17,600▼</span>
          <span className="w-12">400</span>
          <span className="flex-1 pr-[2px]">-2.22%</span>
        </dd>
        <dd className={`${cell} w-[170px]`}>
          <span className="w-[70px]">3,359,335</span>
          <span className="w-[55px] text-[#1040c8]">49.92%</span>
          <span className="flex-1 pr-px">19.63%</span>
        </dd>
        <dd className={`${cell} w-[82px] justify-end pr-px`}>61,823백만</dd>
        <dd className={`${cell} w-[140px] pl-[2px] text-[#1040c8]`}>
          <span className="text-black">최우선</span>
          <span className="w-12">17,580</span>
          <span className="flex-1 pr-1">17,530</span>
        </dd>
        <dd className={`${cell} w-[184px] justify-between pr-[5px] pl-px`}>
          <span>시</span>
          <span className="text-[#e81c0c]">18,510</span>
          <span>고</span>
          <span className="text-[#e81c0c]">19,450</span>
          <span>저</span>
          <span className="text-[#1040c8]">17,060</span>
        </dd>
      </dl>
      <button className="w-10 border border-[#8c8c8c] bg-[#f5d0cc]">매수</button>
      <button className="w-10 border border-[#8c8c8c] bg-[#c8dcf4]">매도</button>
    </div>
  );
}

const raised = 'flex h-[18px] w-[17px] items-center justify-center border border-[#fff] border-r-[#555] border-b-[#555] bg-[#ececec] text-black';

const TOOLS: { name: string; art: ReactNode }[] = [
  { name: '새 창', art: <><path d="M2.5 1.5h9v11h-9z" /><path d="M7.5 8.5h7v6h-7zM11 8.5v6M7.5 11.5h7" fill="#eee" /></> },
  { name: '겹치기', art: <><path d="M1.5 1.5h9v8h-9z" /><path d="M5.5 6.5h9v8h-9zM5.5 8.5h9" fill="#eee" /></> },
  { name: '영역', art: <><path d="M1 2.5h14M1 13.5h14" strokeDasharray="2 1" /><path d="M2 8l3 3 3-4 3 2 3-4" /></> },
  { name: '기준선', art: <path d="M1 4.5h15M5.5 1v14M6 5l6 6M6 9V5h4" /> },
  { name: '추세선', art: <path d="M1 3.5h14M2 13l5-8 4 8 4-4" /> },
  { name: '수직선', art: <path d="M4.5 1v14M1 11l4-5 3 4 3-5 4 6" /> },
  { name: '사선', art: <path d="M1 14L11 2M2 9l4 3 5-7 4 6" /> },
  { name: '지우기', art: <><path d="M2 9l6-7h5l-6 8v3H2zM2 9h5" /><path d="M9.5 11v4M11.5 11v4M13.5 11v4" /></> },
  { name: '저장 이미지', art: <><path d="M4.5 1.5h10v9h-10z" /><path d="M1.5 5.5h10v9h-10zM3 12l3-3 2 2 3-4" fill="#eee" /></> },
  { name: '확대경', art: <><circle cx="7" cy="6" r="5" /><path d="M10 10l4 5" strokeWidth="2" /></> },
  { name: '축소', art: <path d="M3 8h10" strokeWidth="2" /> },
  { name: '확대', art: <path d="M2 8h12M8 2v12" strokeWidth="2" /> },
];

function BottomBar() {
  return (
    <div className="flex h-[18px] items-center bg-[#f2f2f2]">
      <button className={raised} aria-label="왼쪽"><Glyph><path d="M10 4L6 8l4 4z" fill="currentColor" /></Glyph></button>
      <div className="flex h-full flex-1 bg-[#f6f6f6]">
        <span className="flex-[603]" />
        <button className="h-full w-[45px] border border-white border-r-[#555] border-b-[#555] bg-[#ececec]" aria-label="스크롤" />
        <span className="flex-[874]" />
      </div>
      <button className={raised} aria-label="재생"><Glyph><path d="M7 4l4 4-4 4z" fill="currentColor" /></Glyph></button>
      <button className={raised} aria-label="되감기"><Glyph><path d="M8 4L4 8l4 4zM13 4L9 8l4 4z" fill="currentColor" /></Glyph></button>
      <button className={raised} aria-label="정지"><Glyph><path d="M5 5h6v6H5z" fill="currentColor" /></Glyph></button>
      <button className={raised} aria-label="빨리감기"><Glyph><path d="M4 4l4 4-4 4zM9 4l4 4-4 4z" fill="currentColor" /></Glyph></button>
      <label className="relative mx-[6px] block h-[18px] w-[70px]">
        <svg viewBox="0 0 70 18" className="block h-[18px] w-[70px]" shapeRendering="crispEdges" aria-hidden="true">
          <path d="M0 5h70" stroke="#777" strokeWidth="2" />
          <path d="M3.5 2.5h4v7l-2 2-2-2z" fill="#eee" stroke="#666" />
          <path d="M2.5 14v3M9.5 14v3M16.5 14v3M22.5 14v3M29.5 14v3M36.5 14v3M42.5 14v3M49.5 14v3M56.5 14v3M62.5 14v3M68.5 14v3" stroke="#000" />
        </svg>
        <input type="range" min="0" max="10" defaultValue="0" aria-label="재생 속도" className="absolute inset-0 w-full opacity-0" />
      </label>
      <div className="flex items-center gap-px text-[#777]">
        {TOOLS.map((tool, i) => (
          <button key={tool.name} aria-label={tool.name} className={i === 3 ? 'bg-white' : i > 8 ? 'text-[#444]' : ''}>
            <Glyph>{tool.art}</Glyph>
          </button>
        ))}
        <button className="w-[17px] text-[14px] leading-4 font-bold text-[#444]" aria-label="글자 크기">A</button>
      </div>
    </div>
  );
}

export default function App() {
  return (
    <div className="bg-black pt-px pb-[3px] font-['Noto_Sans_CJK_KR','Liberation_Sans',sans-serif]">
      <TitleBar />
      <main className="mx-[3px] bg-[#d0d0d0]">
        <div className="flex flex-col gap-[3px] px-[3px] pt-[5px] pb-[3px]">
          <Toolbar />
          <Quote />
        </div>
        <div className="bg-[#ececec] px-[3px] pb-[2px]">
          <Chart />
          <BottomBar />
        </div>
      </main>
    </div>
  );
}
